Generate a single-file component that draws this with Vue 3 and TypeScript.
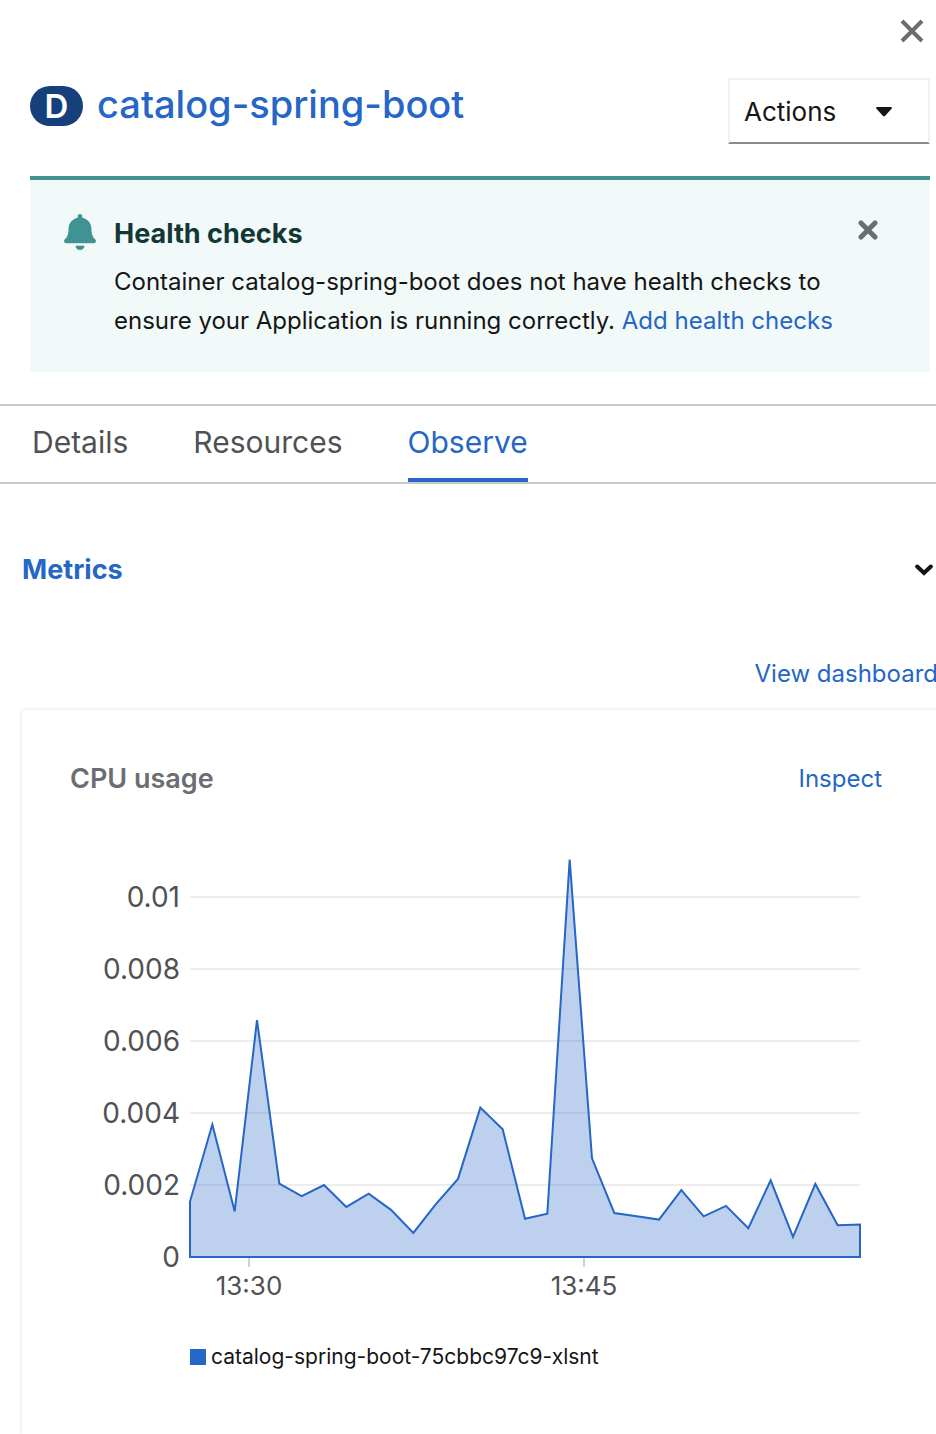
<script setup lang="ts">
import { ref } from 'vue'

const tabs = ['Details', 'Resources', 'Observe']
const activeTab = ref('Observe')
const alertOpen = ref(true)
const metricsOpen = ref(true)

// CPU cores, one sample per minute
const samples: number[] = [
  0.00154, 0.00368, 0.00127, 0.00658, 0.00204, 0.00169, 0.002, 0.00139, 0.00176, 0.00131,
  0.00067, 0.00146, 0.00217, 0.00415, 0.00355, 0.00106, 0.0012, 0.01104, 0.00274, 0.00122,
  0.00113, 0.00104, 0.00186, 0.00113, 0.00142, 0.0008, 0.00213, 0.00056, 0.00203, 0.00088, 0.0009,
]

const plot = { left: 120, right: 790, base: 417 }
const toX = (i: number): number => plot.left + (i * (plot.right - plot.left)) / (samples.length - 1)
const toY = (v: number): number => plot.base - v * 36000

const line = samples.map((v, i) => `${toX(i).toFixed(2)},${toY(v).toFixed(2)}`).join(' L')
const area = `M${plot.left},${plot.base} L${line} L${plot.right},${plot.base} Z`

const yTicks = [0.01, 0.008, 0.006, 0.004, 0.002, 0]
const xTicks = [
  { label: '13:30', x: 179 },
  { label: '13:45', x: 514 },
]
</script>

<template>
  <aside class="panel">
    <div class="panel-top">
      <button class="icon-button" type="button" aria-label="Close">
        <svg width="24" height="24" viewBox="0 0 24 24" aria-hidden="true">
          <path d="M2 2 22 22M22 2 2 22" fill="none" stroke="#6a6e73" stroke-width="4" />
        </svg>
      </button>
    </div>

    <header class="header">
      <h1 class="title">
        <span class="badge" title="Deployment">D</span>
        <a href="#deployment">catalog-spring-boot</a>
      </h1>
      <button class="actions" type="button" aria-haspopup="menu">
        <span>Actions</span>
        <svg width="16" height="10" viewBox="0 0 16 10" aria-hidden="true">
          <path d="M1 0H15Q16.500 0.500 15.500 1.800L9 9Q8 9.800 7 9L0.500 1.800Q-0.500 0.500 1 0Z" fill="#151515" />
        </svg>
      </button>
    </header>

    <section v-if="alertOpen" class="alert">
      <svg class="bell" width="32" height="36" viewBox="0 0 448 512" preserveAspectRatio="none" aria-hidden="true">
        <path
          d="M224 512c35.320 0 63.970-28.650 63.970-64H160.030c0 35.350 28.650 64 63.970 64zm215.390-149.710c-19.320-20.760-55.470-51.990-55.470-154.290 0-77.700-54.480-139.900-127.940-155.160V32c0-17.670-14.320-32-31.980-32s-31.980 14.330-31.980 32v20.840C118.560 68.100 64.080 130.300 64.080 208c0 102.300-36.150 133.530-55.470 154.290-6 6.450-8.660 14.160-8.610 21.710.11 16.400 12.980 32 32.100 32h383.800c19.120 0 32-15.600 32.100-32 .05-7.550-2.610-15.270-8.610-21.710z"
          fill="#3f9393"
        />
        <path d="M150 424H298V446H150Z" fill="#f2f9f9" />
      </svg>
      <div class="alert-body">
        <h2>Health checks</h2>
        <p>
          Container catalog-spring-boot does not have health checks to ensure your Application is running correctly.
          <a href="#health">Add health checks</a>
        </p>
      </div>
      <button class="icon-button alert-close" type="button" aria-label="Dismiss alert" @click="alertOpen = false">
        <svg width="20" height="20" viewBox="0 0 20 20" aria-hidden="true">
          <path d="M3 3 17 17M17 3 3 17" fill="none" stroke="#6a6e73" stroke-width="5" stroke-linecap="round" />
        </svg>
      </button>
    </section>

    <nav class="tabs" role="tablist">
      <button
        v-for="tab in tabs"
        :key="tab"
        type="button"
        role="tab"
        class="tab"
        :class="{ active: tab === activeTab }"
        :aria-selected="tab === activeTab"
        @click="activeTab = tab"
      >
        {{ tab }}
      </button>
    </nav>

    <main class="content">
      <button class="section-toggle" type="button" :aria-expanded="metricsOpen" @click="metricsOpen = !metricsOpen">
        <span>Metrics</span>
        <svg width="18" height="12" viewBox="0 0 18 12" aria-hidden="true">
          <path d="M2.200 2.500 9 9 15.800 2.500" fill="none" stroke="#151515" stroke-width="4" stroke-linecap="round" />
        </svg>
      </button>

      <template v-if="metricsOpen">
        <div class="dashboard-link"><a href="#dashboard">View dashboard</a></div>

        <article class="card">
          <div class="card-head">
            <h3>CPU usage</h3>
            <a href="#inspect">Inspect</a>
          </div>
          <svg class="chart" viewBox="0 0 820 480" role="img" aria-label="CPU usage over time">
            <g v-for="t in yTicks" :key="t">
              <line v-if="t > 0" class="grid" :x1="plot.left" :x2="plot.right" :y1="toY(t)" :y2="toY(t)" />
              <text class="y-label" :x="110" :y="toY(t) + 10">{{ t }}</text>
            </g>
            <g v-for="t in xTicks" :key="t.label">
              <line class="tick" :x1="t.x" :x2="t.x" y1="417" y2="427" />
              <text class="x-label" :x="t.x" y="455">{{ t.label }}</text>
            </g>
            <path class="area" :d="area" />
          </svg>
          <div class="legend">
            <span class="swatch"></span>
            <span>catalog-spring-boot-75cbbc97c9-xlsnt</span>
          </div>
        </article>
      </template>
    </main>
  </aside>
</template>

<style>
body {
  margin: 0;
  background: #fff;
}
</style>

<style scoped>
.panel {
  min-height: 100vh;
  display: flex;
  flex-direction: column;
  overflow: hidden;
  background: #fff;
  color: #151515;
  font-family: Inter, "Open Sans", sans-serif;
  font-size: 24px;
  line-height: 40px;
}

button {
  margin: 0;
  padding: 0;
  border: 0;
  border-radius: 0;
  background: none;
  color: inherit;
  font: inherit;
  cursor: pointer;
}

a {
  color: #2566c6;
  text-decoration: none;
}

h1,
h2,
h3,
p {
  margin: 0;
}

.icon-button {
  display: flex;
  flex: none;
}

.panel-top {
  display: flex;
  justify-content: flex-end;
  padding: 19px 12px 35px;
}

.header {
  display: flex;
  align-items: flex-start;
  justify-content: space-between;
  padding: 0 6px 0 30px;
}

.title {
  display: flex;
  align-items: center;
  gap: 14px;
  padding-top: 2px;
  font-size: 38px;
  font-weight: 500;
  line-height: 48px;
}

.badge {
  display: flex;
  align-items: center;
  justify-content: center;
  width: 53px;
  height: 40px;
  margin-top: 4px;
  border-radius: 20px;
  background: #16407c;
  color: #fff;
  font-size: 33px;
  font-weight: 600;
  line-height: 40px;
}

.actions {
  box-sizing: border-box;
  display: flex;
  align-items: center;
  justify-content: space-between;
  width: 202px;
  height: 66px;
  padding: 2px 36px 0 14px;
  border: 2px solid #f0f0f0;
  border-bottom-color: #8a8d90;
  font-size: 26px;
}

.alert {
  display: flex;
  align-items: flex-start;
  margin: 32px 6px 32px 30px;
  padding: 34px 52px 32px 34px;
  border-top: 4px solid #3f9393;
  background: #f2f9f9;
}

.bell {
  flex: none;
}

.alert-body {
  flex: 1;
  margin-left: 18px;
}

.alert-body h2 {
  margin-bottom: 8px;
  color: #133737;
  font-size: 27px;
  font-weight: 700;
}

.alert-body p {
  line-height: 39px;
}

.alert-close {
  margin: 6px 0 0 12px;
}

.tabs {
  display: flex;
  gap: 65px;
  padding-left: 32px;
  border-top: 2px solid #c9c9c9;
  border-bottom: 2px solid #c9c9c9;
}

.tab {
  padding: 16px 0;
  border-bottom: 4px solid transparent;
  color: #4f5255;
  font-size: 30px;
}

.tab.active {
  border-bottom-color: #2566c6;
  color: #2566c6;
}

.content {
  flex: 1;
  display: flex;
  flex-direction: column;
  margin-right: -2px;
  padding: 66px 0 0 22px;
}

.section-toggle {
  display: flex;
  align-items: center;
  justify-content: space-between;
  padding-right: 5px;
  color: #2566c6;
  font-size: 27px;
  font-weight: 700;
}

.dashboard-link {
  margin-top: 64px;
  text-align: right;
}

.card {
  flex: 1;
  margin-top: 16px;
  padding: 49px 48px 48px;
  background: #fff;
  box-shadow: 0 0 4px rgba(3, 3, 3, 0.16);
}

.card-head {
  display: flex;
  align-items: center;
  justify-content: space-between;
  padding-right: 8px;
}

.card-head h3 {
  color: #6a6e73;
  font-size: 27px;
  font-weight: 600;
}

.chart {
  display: block;
  width: 100%;
  margin-top: 41px;
}

.grid {
  stroke: #ededed;
  stroke-width: 2;
}

.tick {
  stroke: #d2d2d2;
  stroke-width: 2;
}

.y-label,
.x-label {
  fill: #4f5255;
}

.y-label {
  font-size: 28px;
  text-anchor: end;
}

.x-label {
  font-size: 26px;
  text-anchor: middle;
}

.area {
  fill: #2566c6;
  fill-opacity: 0.3;
  stroke: #2566c6;
  stroke-width: 2;
}

.legend {
  display: flex;
  align-items: center;
  gap: 5px;
  margin-top: 17px;
  padding-left: 120px;
  font-size: 21px;
}

.swatch {
  width: 16px;
  height: 16px;
  background: #2566c6;
}
</style>
